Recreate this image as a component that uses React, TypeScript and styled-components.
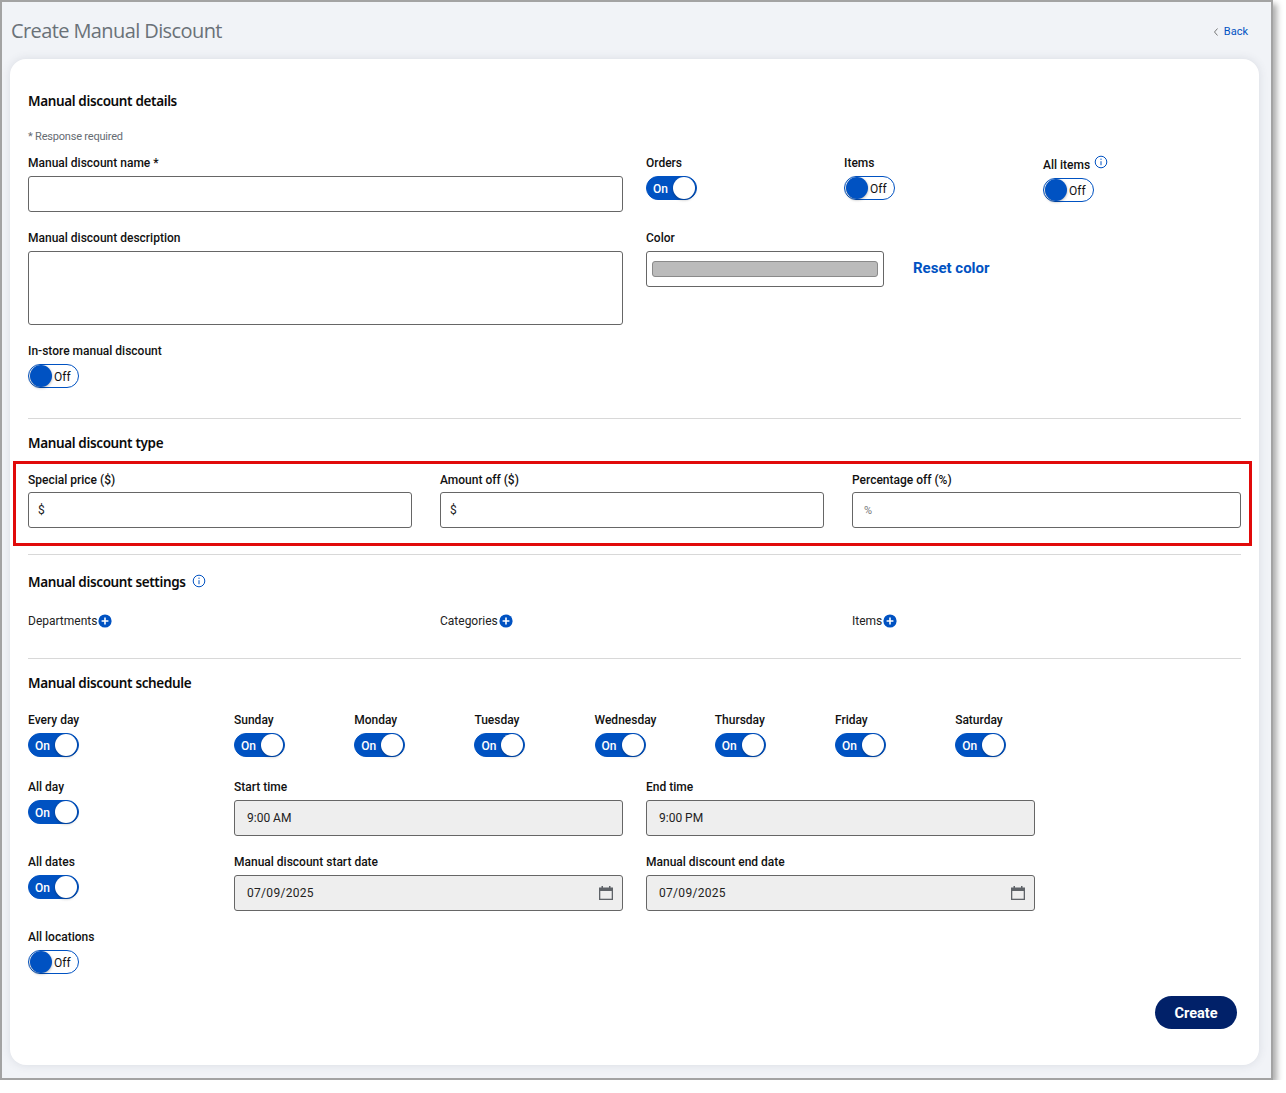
import React from "react";
import styled, { createGlobalStyle } from "styled-components";

const Global = createGlobalStyle`
  html, body { margin: 0; padding: 0; background: #fff; }
  * { box-sizing: border-box; }
  body { font-family: Roboto, "Liberation Sans", sans-serif; color: #111; }
`;

const Frame = styled.div`
  width: 1273px;
  height: 1080px;
  background: #f1f3f7;
  border: 2px solid #a3a3a3;
  box-shadow: 4px 4px 6px rgba(0, 0, 0, 0.32);
  padding: 0 12px 0 8px;
`;
const Header = styled.header`
  height: 57px;
  display: flex;
  align-items: center;
  justify-content: space-between;
  padding: 0 11px 0 1px;
`;
const Title = styled.h1`
  margin: 0;
  font: 400 20px/24px "Open Sans", sans-serif;
  letter-spacing: -0.6px;
  color: #6a7178;
`;
const BackLink = styled.a`
  display: flex;
  align-items: center;
  gap: 5px;
  margin-top: 2px;
  font-size: 11px;
  color: #0052c2;
`;
const Card = styled.main`
  width: 1249px;
  height: 1006px;
  background: #fff;
  border-radius: 16px;
  box-shadow: 0 0 10px rgba(60, 70, 90, 0.13);
  padding: 0 18px;
`;
const Section = styled.section<{ $top: number }>`
  padding-top: ${(p) => p.$top}px;
`;
const Heading = styled.h2`
  margin: 0;
  display: flex;
  align-items: flex-start;
  gap: 6px;
  font: 600 13.5px/20px "Noto Sans", sans-serif;
  letter-spacing: -0.36px;
  color: #0b0b0b;
`;
const HeadingInfo = styled.span`
  display: flex;
  margin-top: 2px;
`;
const Required = styled.p`
  margin: 19px 0 0;
  font-size: 11px;
  letter-spacing: -0.2px;
  line-height: 14px;
  color: #666c72;
`;
const DetailGrid = styled.div`
  display: grid;
  grid-template-columns: 595px 1fr;
  column-gap: 23px;
  margin-top: 12px;
`;
const FieldStack = styled.div`
  display: flex;
  flex-direction: column;
`;
const Field = styled.div<{ $mt?: number }>`
  display: flex;
  flex-direction: column;
  margin-top: ${(p) => p.$mt ?? 0}px;
`;
const Label = styled.label<{ $gap?: number }>`
  display: flex;
  gap: 4px;
  align-items: flex-start;
  font-size: 12px;
  font-weight: 500;
  line-height: 14px;
  color: #111;
  height: 14px;
  margin-bottom: ${(p) => p.$gap ?? 6}px;
`;
const LabelInfo = styled.span`
  display: flex;
  margin-top: -3px;
`;
const Input = styled.div<{ $muted?: boolean; $h?: number }>`
  height: ${(p) => p.$h ?? 36}px;
  border: 1px solid #666;
  border-radius: 3px;
  background: ${(p) => (p.$muted ? "#eeeeee" : "#fff")};
  display: flex;
  align-items: center;
  justify-content: space-between;
  padding: 0 8px 0 12px;
  font-size: 12px;
  color: #222;
`;
const Prefix = styled.span<{ $pale?: boolean }>`
  margin-left: ${(p) => (p.$pale ? -1 : -3)}px;
  font-size: ${(p) => (p.$pale ? 11 : 12)}px;
  color: ${(p) => (p.$pale ? "#777" : "#222")};
`;
const DateText = styled.span`
  letter-spacing: 0.3px;
`;
const ToggleRow = styled.div`
  display: grid;
  grid-template-columns: 198px 199px 1fr;
`;
const ColorRow = styled.div`
  display: flex;
  align-items: center;
  gap: 29px;
`;
const ColorBox = styled.div`
  width: 238px;
  height: 36px;
  border: 1px solid #666;
  border-radius: 3px;
  padding: 9px 5px;
`;
const Swatch = styled.div`
  height: 16px;
  background: #bbbbbb;
  border: 1px solid #8a8a8a;
  border-radius: 3px;
`;
const ResetLink = styled.a`
  font-size: 15px;
  font-weight: 700;
  color: #0052c2;
  margin-top: -3px;
`;
const Track = styled.div<{ $on: boolean }>`
  position: relative;
  width: 51px;
  height: 24px;
  border-radius: 12px;
  border: 1px solid #0052c2;
  background: ${(p) => (p.$on ? "#0052c2" : "#fff")};
  color: ${(p) => (p.$on ? "#fff" : "#111")};
  font-size: 12px;
  font-weight: ${(p) => (p.$on ? 500 : 400)};
  line-height: 24px;
  padding-left: ${(p) => (p.$on ? 6 : 25)}px;
`;
const Knob = styled.span<{ $on: boolean }>`
  position: absolute;
  top: 0;
  left: ${(p) => (p.$on ? 26 : 1)}px;
  width: 22px;
  height: 22px;
  border-radius: 50%;
  background: ${(p) => (p.$on ? "#fff" : "#0052c2")};
  box-shadow: 0 1px 3px rgba(0, 0, 0, 0.3);
`;
const Divider = styled.hr<{ $top: number }>`
  margin: ${(p) => p.$top}px 0 0;
  border: 0;
  border-top: 1px solid #d8d8d8;
`;
const Highlight = styled.div`
  margin: 8px -11px 0 -15px;
  height: 85px;
  border: 3px solid #e10a0a;
  padding: 9px 8px 0 12px;
  display: grid;
  grid-template-columns: 384px 384px 389px;
  column-gap: 28px;
`;
const Adders = styled.div`
  display: grid;
  grid-template-columns: 384px 384px 389px;
  column-gap: 28px;
  margin-top: 20px;
`;
const Adder = styled.div`
  display: flex;
  align-items: center;
  gap: 1px;
  height: 18px;
  font-size: 12px;
  color: #222;
`;
const ScheduleRow = styled.div<{ $mt: number }>`
  display: grid;
  grid-template-columns: 183px 389px 389px;
  column-gap: 23px;
  margin-top: ${(p) => p.$mt}px;
`;
const DaysRow = styled.div`
  display: grid;
  grid-template-columns: 206px repeat(7, 120.2px);
  margin-top: 20px;
`;
const Actions = styled.div`
  display: flex;
  justify-content: flex-end;
  padding-right: 4px;
  margin-top: 22px;
`;
const CreateButton = styled.button`
  width: 82px;
  height: 33px;
  border: 0;
  border-radius: 17px;
  padding: 1px 0 0;
  background: #012169;
  color: #fff;
  font: 700 14.5px Roboto, sans-serif;
`;

const Toggle = ({ on }: { on: boolean }) => (
  <Track $on={on}>
    {on ? "On" : "Off"}
    <Knob $on={on} />
  </Track>
);

const Info = () => (
  <svg width="14" height="14" viewBox="0 0 14 14" fill="none" stroke="#0052c2">
    <circle cx="7" cy="7" r="5.8" />
    <path d="M7 6.2v4M7 3.6v1.3" />
  </svg>
);

const Plus = () => (
  <svg width="14" height="14" viewBox="0 0 14 14">
    <circle cx="7" cy="7" r="6.6" fill="#0052c2" />
    <path d="M7 3.6v6.8M3.6 7h6.8" stroke="#fff" strokeWidth="1.6" />
  </svg>
);

const Calendar = () => (
  <svg width="16" height="16" viewBox="0 0 16 16">
    <path d="M3.5 1h1.5v1.5h6V1h1.5v1.5H15V15H1V2.5h2.5z" fill="#5f6368" />
    <rect x="2.3" y="6" width="11.4" height="7.7" fill="#eeeeee" />
  </svg>
);

const Chevron = () => (
  <svg width="6" height="10" viewBox="0 0 6 10" fill="none" stroke="#777">
    <path d="M4.5 1.5 1.5 5l3 3.5" />
  </svg>
);

const days = ["Sunday", "Monday", "Tuesday", "Wednesday", "Thursday", "Friday", "Saturday"];

export default function App() {
  return (
    <Frame>
      <Global />
      <Header>
        <Title>Create Manual Discount</Title>
        <BackLink>
          <Chevron />
          Back
        </BackLink>
      </Header>
      <Card>
        <Section $top={32}>
          <Heading>Manual discount details</Heading>
          <Required>* Response required</Required>
          <DetailGrid>
            <FieldStack>
              <Field>
                <Label>Manual discount name *</Label>
                <Input />
              </Field>
              <Field $mt={19}>
                <Label>Manual discount description</Label>
                <Input $h={74} />
              </Field>
              <Field $mt={19}>
                <Label>In-store manual discount</Label>
                <Toggle on={false} />
              </Field>
            </FieldStack>
            <FieldStack>
              <ToggleRow>
                <Field>
                  <Label>Orders</Label>
                  <Toggle on />
                </Field>
                <Field>
                  <Label>Items</Label>
                  <Toggle on={false} />
                </Field>
                <Field $mt={2}>
                  <Label>
                    All items
                    <LabelInfo>
                      <Info />
                    </LabelInfo>
                  </Label>
                  <Toggle on={false} />
                </Field>
              </ToggleRow>
              <Field $mt={29}>
                <Label>Color</Label>
                <ColorRow>
                  <ColorBox>
                    <Swatch />
                  </ColorBox>
                  <ResetLink>Reset color</ResetLink>
                </ColorRow>
              </Field>
            </FieldStack>
          </DetailGrid>
        </Section>
        <Divider $top={30} />
        <Section $top={14}>
          <Heading>Manual discount type</Heading>
          <Highlight>
            <Field>
              <Label $gap={5}>Special price ($)</Label>
              <Input>
                <Prefix>$</Prefix>
              </Input>
            </Field>
            <Field>
              <Label $gap={5}>Amount off ($)</Label>
              <Input>
                <Prefix>$</Prefix>
              </Input>
            </Field>
            <Field>
              <Label $gap={5}>Percentage off (%)</Label>
              <Input>
                <Prefix $pale>%</Prefix>
              </Input>
            </Field>
          </Highlight>
        </Section>
        <Divider $top={8} />
        <Section $top={17}>
          <Heading>
            Manual discount settings
            <HeadingInfo>
              <Info />
            </HeadingInfo>
          </Heading>
          <Adders>
            <Adder>
              Departments
              <Plus />
            </Adder>
            <Adder>
              Categories
              <Plus />
            </Adder>
            <Adder>
              Items
              <Plus />
            </Adder>
          </Adders>
        </Section>
        <Divider $top={28} />
        <Section $top={14}>
          <Heading>Manual discount schedule</Heading>
          <DaysRow>
            <Field>
              <Label>Every day</Label>
              <Toggle on />
            </Field>
            {days.map((d) => (
              <Field key={d}>
                <Label>{d}</Label>
                <Toggle on />
              </Field>
            ))}
          </DaysRow>
          <ScheduleRow $mt={23}>
            <Field>
              <Label>All day</Label>
              <Toggle on />
            </Field>
            <Field>
              <Label>Start time</Label>
              <Input $muted>9:00 AM</Input>
            </Field>
            <Field>
              <Label>End time</Label>
              <Input $muted>9:00 PM</Input>
            </Field>
          </ScheduleRow>
          <ScheduleRow $mt={19}>
            <Field>
              <Label>All dates</Label>
              <Toggle on />
            </Field>
            <Field>
              <Label>Manual discount start date</Label>
              <Input $muted>
                <DateText>07/09/2025</DateText>
                <Calendar />
              </Input>
            </Field>
            <Field>
              <Label>Manual discount end date</Label>
              <Input $muted>
                <DateText>07/09/2025</DateText>
                <Calendar />
              </Input>
            </Field>
          </ScheduleRow>
          <ScheduleRow $mt={19}>
            <Field>
              <Label>All locations</Label>
              <Toggle on={false} />
            </Field>
          </ScheduleRow>
          <Actions>
            <CreateButton>Create</CreateButton>
          </Actions>
        </Section>
      </Card>
    </Frame>
  );
}
